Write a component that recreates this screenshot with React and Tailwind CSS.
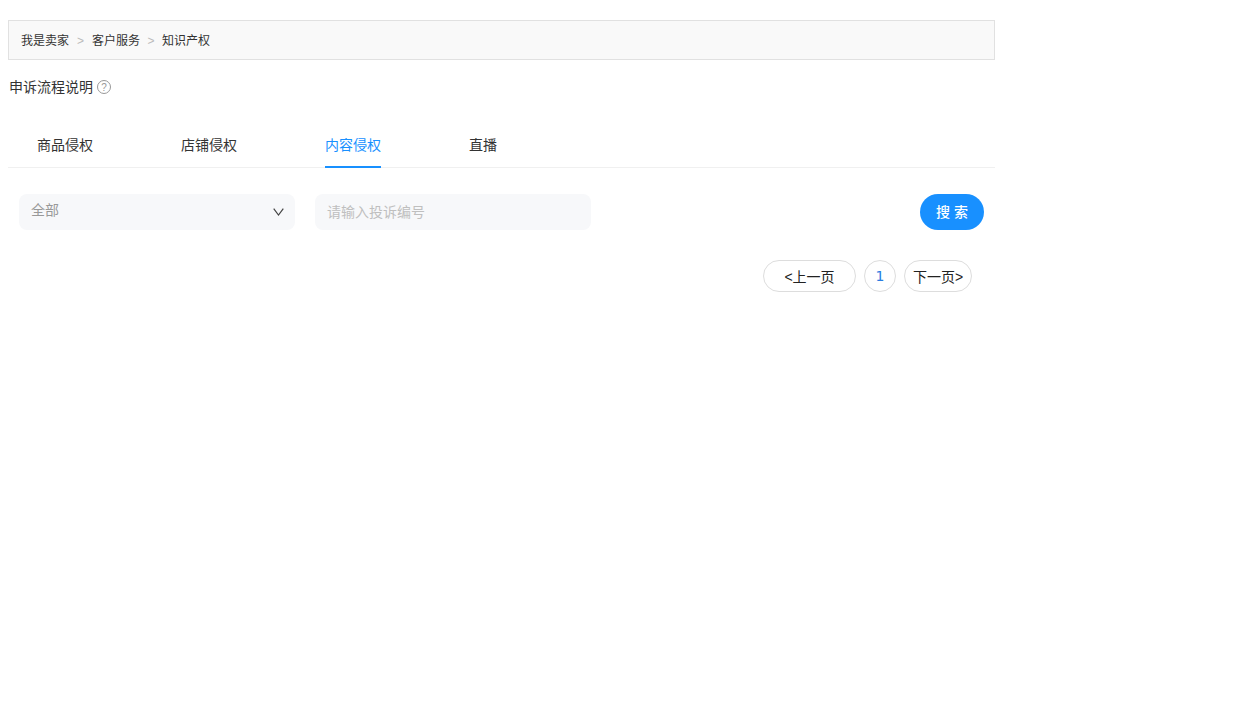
const font = "font-['Liberation_Sans','Noto_Sans_CJK_SC',sans-serif]";

function Crumbs() {
    return (
        <div className="h-10 flex items-center pl-3 pt-[2px] bg-[#f9f9f9] border border-[#e1e1e1] text-xs text-[#333]">
            <span>我是卖家</span>
            <span className="w-[23px] text-center text-[#bbb]">&gt;</span>
            <span>客户服务</span>
            <span className="w-[22px] text-center text-[#bbb]">&gt;</span>
            <span>知识产权</span>
        </div>
    );
}

function Tabs() {
    return (
        <div className="mt-[27px] h-11 flex border-b border-[#f0f0f0] text-[14px] text-[#333]">
            <div className="ml-[29px] w-14 leading-[42px]">商品侵权</div>
            <div className="ml-[88px] w-14 leading-[42px]">店铺侵权</div>
            <div className="ml-[88px] w-14 h-11 leading-[42px] text-[#1890ff] border-b-2 border-[#1890ff]">内容侵权</div>
            <div className="ml-[88px] w-7 leading-[42px]">直播</div>
        </div>
    );
}

function Filters() {
    return (
        <div className="mt-[26px] flex items-center pl-[11px] pr-[11px]">
            <div className="w-[276px] h-9 flex items-center justify-between pl-3 pr-[11px] rounded-lg bg-[#f7f8fa]">
                <span className="text-[14px] text-[#999] -mt-1">全部</span>
                {/* select arrow */}
                <svg width="11" height="8" viewBox="0 0 11 8" fill="none" stroke="#444" strokeWidth="1.2">
                    <path d="M0.7 0.7 L5.5 7 L10.3 0.7" />
                </svg>
            </div>
            <div className="ml-5 w-[276px] h-9 flex items-center pl-3 rounded-lg bg-[#f7f8fa] text-[14px] text-[#bfbfbf]">
                请输入投诉编号
            </div>
            <button className="ml-auto w-16 h-9 rounded-[18px] bg-[#1890ff] text-white text-[14px] font-medium">搜 索</button>
        </div>
    );
}

function Pager() {
    return (
        <div className="mt-[30px] flex justify-end gap-2 pr-[23px] text-[14px] text-[#222]">
            <div className="w-[93px] h-8 flex items-center justify-center pt-[2px] rounded-2xl border border-[#ddd]">&lt;上一页</div>
            <div className="w-8 h-8 flex items-center justify-center rounded-2xl border border-[#ddd] text-[#2a7de1] font-['DejaVu_Sans',sans-serif]">1</div>
            <div className="w-[68px] h-8 flex items-center justify-center pt-[2px] rounded-2xl border border-[#ddd]">下一页&gt;</div>
        </div>
    );
}

export default function App() {
    return (
        <div className={`min-h-[715px] bg-white ${font}`}>
            <div className="w-[987px] ml-2 pt-5">
                <Crumbs />
                <div className="mt-[17px] h-5 flex items-center pl-px text-[14px] text-[#333]">
                    申诉流程说明
                    <span className="ml-1 w-[14px] h-[14px] flex items-center justify-center rounded-full border border-[#999] text-[10px] text-[#999]">?</span>
                </div>
                <Tabs />
                <Filters />
                <Pager />
            </div>
        </div>
    );
}
